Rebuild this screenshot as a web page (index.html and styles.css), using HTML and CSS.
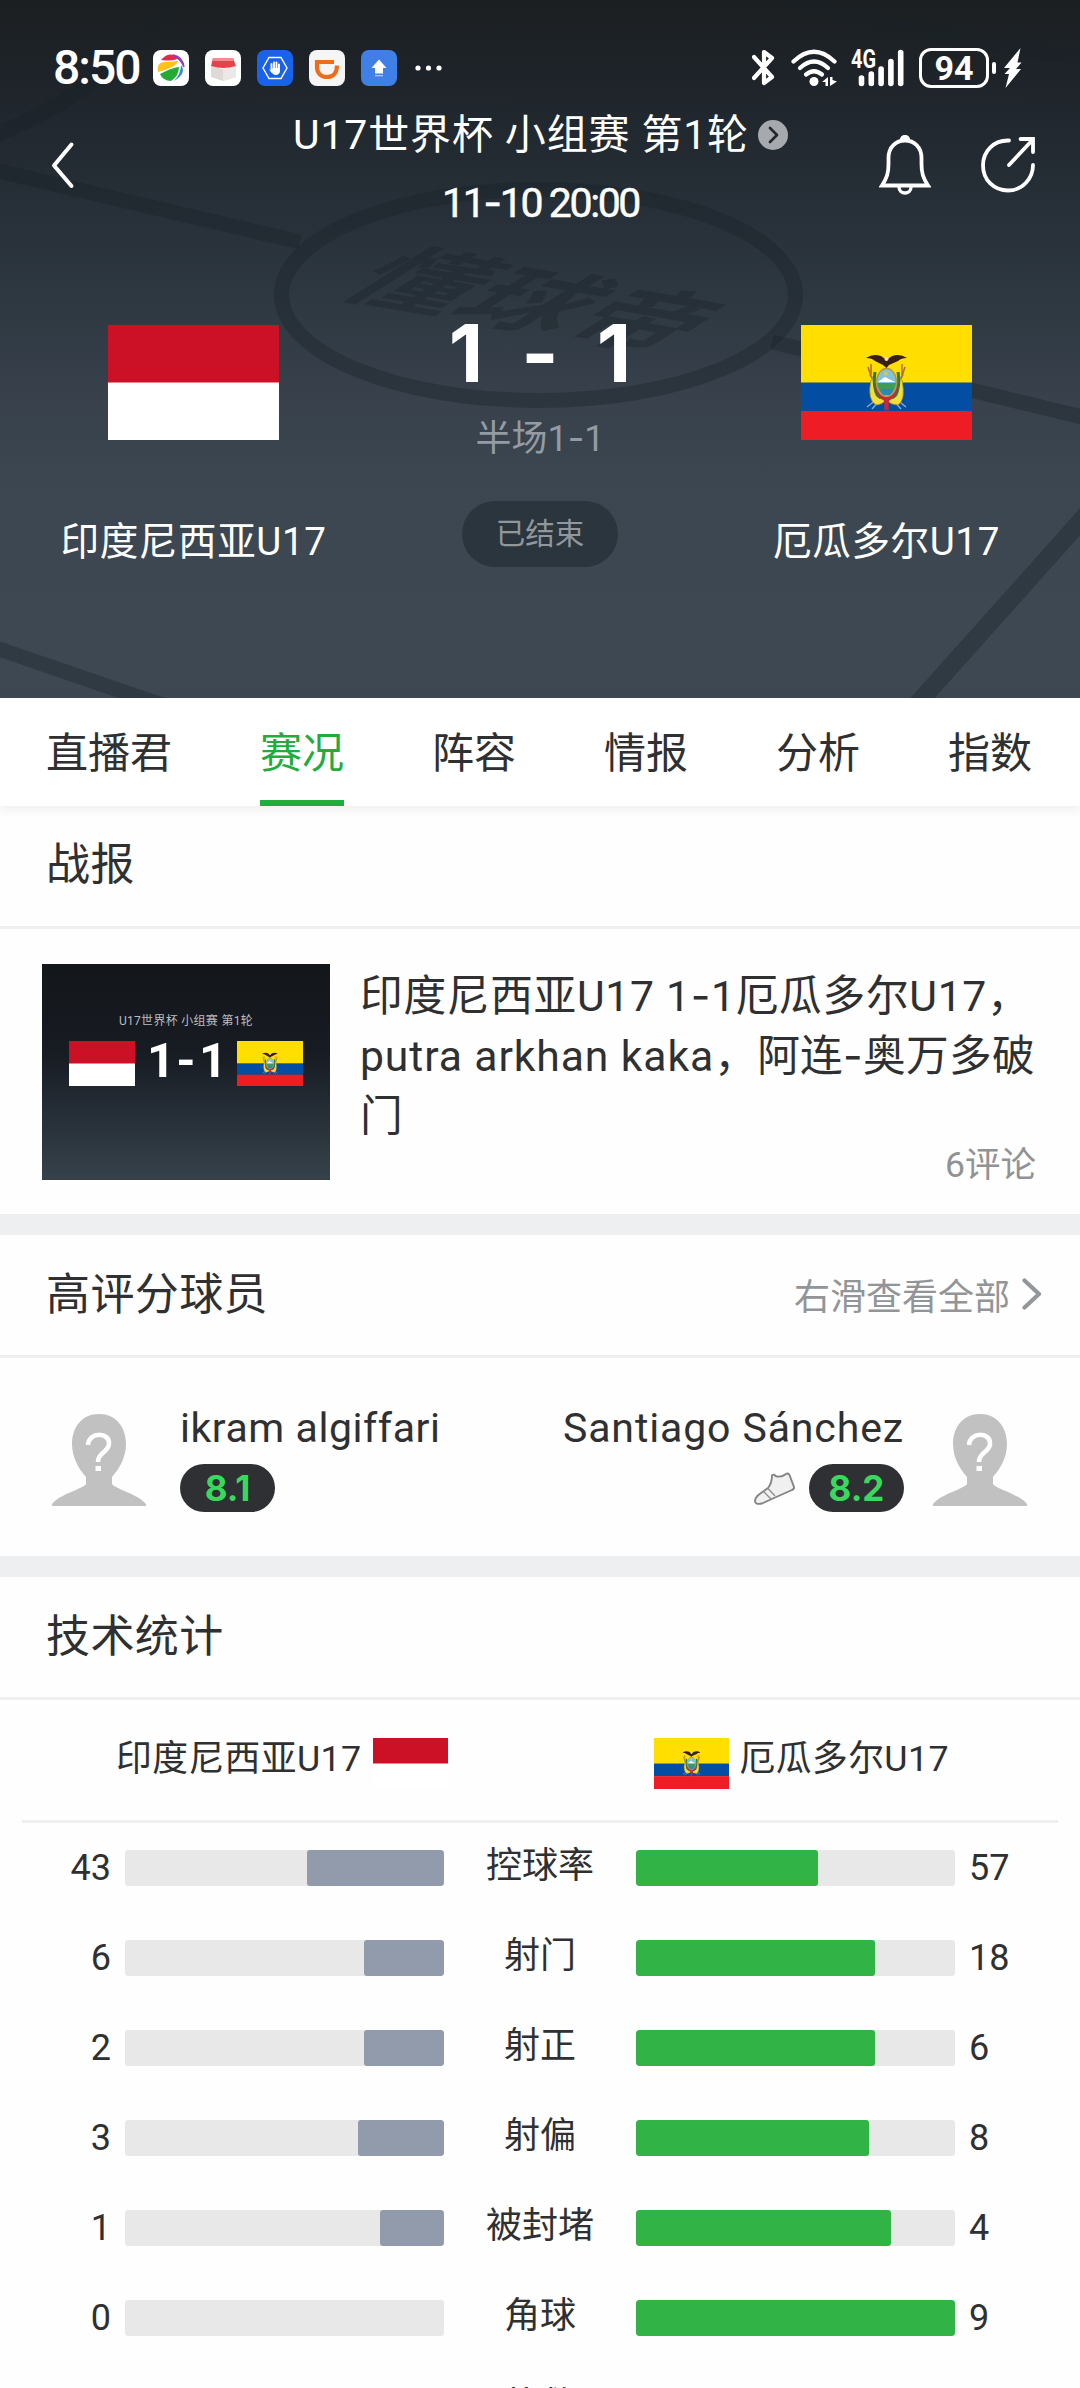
FILE: index.html
```html
<!DOCTYPE html>
<html lang="zh-CN">
<head>
<meta charset="utf-8">
<title>U17世界杯 小组赛 第1轮</title>
<link rel="stylesheet" href="styles.css">
</head>
<body>
<svg class="defs" width="0" height="0" aria-hidden="true">
  <symbol id="flag-id" viewBox="0 0 171 115" preserveAspectRatio="none">
    <rect width="171" height="115" fill="#fff"/>
    <rect width="171" height="57.5" fill="#cc1126"/>
  </symbol>
  <symbol id="flag-ec" viewBox="0 0 171 115" preserveAspectRatio="none">
    <rect width="171" height="58" fill="#ffde00"/>
    <rect y="57.5" width="171" height="29" fill="#034ea2"/>
    <rect y="86" width="171" height="29" fill="#ee1c25"/>
    <path d="M68 50 L77 56 M103 50 L94 56 M66 82 L76 74 M105 82 L95 74 M71 84 L78 76 M100 84 L93 76" stroke="#8fa9c4" stroke-width="1.4"/>
    <path d="M67 42 L71 54 M104 42 L100 54 M70 39 V50 M101 39 V50" stroke="#b5702c" stroke-width="1.6"/>
    <path d="M70 55 Q66 75 75 80 Q81 80 85 75 Q90 80 97 80 Q105 75 101 55 L96 55 Q100 70 93 73 L78 73 Q71 70 75 55 Z" fill="#f4de3c" stroke="#a08a20" stroke-width=".8"/>
    <path d="M74 47 Q71 66 80 73 M97 47 Q100 66 91 73" stroke="#2f7a3a" stroke-width="3" fill="none"/>
    <path d="M76 60 Q77 71 85.500 75 Q94 71 95 60" stroke="#c8283c" stroke-width="4" fill="none"/>
    <path d="M83 73 H88 L87.500 87 L85.500 84 L83.500 87 Z" fill="#c8283c"/>
    <ellipse cx="85.500" cy="57.500" rx="10" ry="14" fill="#7fc4dc" stroke="#b9973a" stroke-width="1.500"/>
    <path d="M77 57 L84 52 L94 57 Z" fill="#fff"/>
    <path d="M76 58 H95 Q94 65 90 69 L81 69 Q77 65 76 58Z" fill="#3f9a62"/>
    <path d="M80 64 H92 L89 70 H82Z" fill="#2a88b4"/>
    <circle cx="85" cy="48.500" r="2" fill="#e0c63c"/>
    <path d="M65 33 Q72 28 80 31 L85.500 35 L91 31 Q99 28 106 33 Q100 33 97 36 L88 40 L85.500 43 L82 40 L74 36 Q71 33 65 33Z" fill="#3a1f16"/>
    <circle cx="85.500" cy="34" r="2" fill="#e9dfc8"/>
  </symbol>
  <symbol id="avatar" viewBox="0 0 96 92">
    <path d="M48 0C65 0 75 13 75 30C75 44 68 55 61 63V70C64 75 87 80 95 90Q96 92 93 92H3Q0 92 1 90C9 80 32 75 35 70V63C28 55 21 44 21 30C21 13 31 0 48 0Z" fill="#c1c1c1"/>
    <path d="M37 31C38 17 59 18 58 30C57 39 47 38 47 48" stroke="#fff" stroke-width="4.600" fill="none"/>
    <rect x="44.500" y="52" width="5.500" height="5" fill="#fff"/>
  </symbol>
</svg>

<header class="hero">
  <svg class="pitch" viewBox="0 0 1080 698" aria-hidden="true">
    <g class="pitch-lines">
      <ellipse cx="538.500" cy="295" rx="257" ry="105.500"/>
      <path d="M175 0Q110 90 -10 137"/>
      <path d="M-10 169L300 242"/>
      <path d="M772 342L1090 419"/>
      <path d="M790 0Q940 40 1090 58"/>
      <path d="M-10 646L165 706"/>
      <path d="M1095 505L910 712" stroke-width="18"/>
    </g>
    <text class="pitch-mark" transform="matrix(1.09 .19 -.95 .6 334 294)">懂球帝</text>
  </svg>

  <div class="status">
    <span class="clock">8:50</span>
    <div class="apps">
      <svg viewBox="0 0 36 36"><rect width="36" height="36" rx="8" fill="#fff"/><path d="M8 10Q16 1 25 7Q24 12 8 10Z" fill="#e62a4c"/><path d="M20 5Q30 7 31 17Q28 9 20 5Z" fill="#8a3fc0" stroke="#8a3fc0" stroke-width="1.500"/><path d="M5 22Q3 11 14 12L25 11Q24 17 5 22Z" fill="#fcc21b"/><path d="M7 24Q18 18 26 17Q26 26 18 31Q10 31 7 24Z" fill="#23ab35"/><path d="M28 15Q34 23 21 31Q28 24 28 15Z" fill="#2f83e0"/></svg>
      <svg viewBox="0 0 36 36"><rect width="36" height="36" rx="8" fill="#fff"/><path d="M6 16L18 19V31L6 27ZM31 16L18 19V31L31 27Z" fill="#dcd9d7"/><path d="M18 19V31L31 27V16Z" fill="#ebe8e6"/><path d="M8 8H28L31 16Q18 20 6 16Z" fill="#e8414b"/><path d="M8 8H28L28.500 11H7.500Z" fill="#f48a8e"/></svg>
      <svg viewBox="0 0 36 36"><rect width="36" height="36" rx="8" fill="#1a62ea"/><path d="M12 7.500H24L30 18L24 28.500H12L6 18Z" fill="none" stroke="#fff" stroke-width="1.400"/><path d="M14.500 14V21M17 12.500V20M19.500 12.500V20M22 14.500V20" stroke="#fff" stroke-width="1.900" stroke-linecap="round"/><path d="M12 18.500L16 22H23V20Q23 25 18.500 25Q15 25 12 18.500Z" fill="#fff"/><rect x="14" y="18" width="9" height="5" rx="2" fill="#fff"/></svg>
      <svg viewBox="0 0 36 36"><rect width="36" height="36" rx="8" fill="#f6f5f5"/><path d="M25 12H8V17C8 23 12 27 18 27C24 27 28 23 28 15.500" fill="none" stroke="#ef6c1a" stroke-width="4.200"/></svg>
      <svg viewBox="0 0 36 36"><rect width="36" height="36" rx="8" fill="#4080e6"/><path d="M18 9.500L25.500 18H22V23.500H14V18H10.500Z" fill="#fff"/><rect x="14" y="25" width="8" height="1.300" fill="#a9c8f6"/></svg>
      <svg class="more" viewBox="0 0 28 36"><g fill="#fff"><circle cx="3" cy="18" r="2.600"/><circle cx="13.500" cy="18" r="2.600"/><circle cx="24" cy="18" r="2.600"/></g></svg>
    </div>
    <div class="signals">
      <svg class="bt" viewBox="0 0 24 38"><path d="M2 8L20 28L12 34V3L20 9L2 29" fill="none" stroke="#fff" stroke-width="4.200" stroke-linecap="round" stroke-linejoin="round"/></svg>
      <svg class="wifi" viewBox="0 0 46 38"><g fill="none" stroke="#fff" stroke-width="4.200" stroke-linecap="round"><path d="M2.500 12.500Q23 -7 43.500 12.500"/><path d="M9 19Q23 6 37 19"/><path d="M15 25.500Q23 19 31 25.500"/></g><circle cx="23" cy="32.500" r="4.500" fill="#fff"/><path d="M37 28V37H34.500V33H31ZM39 28V37L46 32.500L41.500 31V28Z" fill="#fff"/></svg>
      <svg class="cell" viewBox="0 0 54 38"><text class="net" x="0" y="19" textLength="25" lengthAdjust="spacingAndGlyphs">4G</text><g stroke="#fff" stroke-width="5.600" stroke-linecap="round"><path d="M10.500 29V34.500M20.300 25V34.500M30.100 20V34.500M39.900 12.500V34.500M49.700 3.500V34.500"/></g></svg>
      <div class="battery"><span class="level">94</span></div>
      <i class="battery-cap"></i>
      <svg class="bolt" viewBox="0 0 20 40"><path d="M17.500 0L1 20H7L1.500 26H6L2.500 40L18 21H13L18.500 14.500H14.500Z" fill="#fff"/></svg>
    </div>
  </div>

  <div class="nav">
    <svg class="back" viewBox="0 0 24 48"><path d="M20.500 3.500L3 24.500L20.500 45" fill="none" stroke="#fff" stroke-width="4" stroke-linecap="round" stroke-linejoin="round"/></svg>
    <div class="heading">
      <div class="league"><span>U17世界杯 小组赛 第1轮</span>
        <svg viewBox="0 0 30 30"><circle cx="15" cy="15" r="15" fill="#a6aaae"/><path d="M12 8L19 15L12 22" fill="none" stroke="#22282e" stroke-width="2.700" stroke-linecap="round" stroke-linejoin="round"/></svg>
      </div>
      <div class="kickoff">11<span class="dash">-</span>10 20:00</div>
    </div>
    <div class="actions">
      <svg class="bell" viewBox="0 0 52 60"><path d="M3 50.500C8 43 9.500 38 9.500 29V23C9.500 12 17 5.500 26 5.500C35 5.500 42.500 12 42.500 23V29C42.500 38 44 43 49 50.500Z" fill="none" stroke="#fff" stroke-width="3.800"/><path d="M21 5C21 1.500 23 0 26 0S31 1.500 31 5Z" fill="#fff"/><path d="M20 52C20 60 32 60 32 52" fill="none" stroke="#fff" stroke-width="3.400"/></svg>
      <svg class="share" viewBox="0 0 54 56"><path d="M28 3.500C13 3 2 14 2 28.500C2 43 13 53.500 27 53.500C41 53.500 52 42 52 28M28 28L51 3.500M39.500 2H52V15" fill="none" stroke="#fff" stroke-width="3.800" stroke-linecap="round"/></svg>
    </div>
  </div>

  <div class="match">
    <div class="team">
      <svg class="flag"><use href="#flag-id"/></svg>
      <span class="team-name">印度尼西亚U17</span>
    </div>
    <div class="result">
      <div class="score"><span>1</span><span>-</span><span>1</span></div>
      <div class="half">半场1<span class="dash">-</span>1</div>
      <div class="state">已结束</div>
    </div>
    <div class="team">
      <svg class="flag"><use href="#flag-ec"/></svg>
      <span class="team-name">厄瓜多尔U17</span>
    </div>
  </div>
</header>

<nav class="tabs">
  <span class="tab">直播君</span>
  <span class="tab active">赛况</span>
  <span class="tab">阵容</span>
  <span class="tab">情报</span>
  <span class="tab">分析</span>
  <span class="tab">指数</span>
</nav>

<section class="section report">
  <div class="section-head"><h2>战报</h2></div>
  <article class="news">
    <div class="thumb">
      <div class="thumb-title">U17世界杯 小组赛 第1轮</div>
      <div class="thumb-match">
        <svg class="thumb-flag"><use href="#flag-id"/></svg>
        <div class="thumb-score"><span>1</span><span>-</span><span>1</span></div>
        <svg class="thumb-flag"><use href="#flag-ec"/></svg>
      </div>
    </div>
    <div class="news-body">
      <p><span class="teams">印度尼西亚U17 1<span class="dash">-</span>1厄瓜多尔U17，</span><br><span class="scorer">putra arkhan kaka</span>，阿连<span class="dash">-</span>奥万多破<br>门</p>
      <span class="comments">6评论</span>
    </div>
  </article>
</section>

<section class="section">
  <div class="section-head">
    <h2>高评分球员</h2>
    <div class="more-link"><span>右滑查看全部</span><svg viewBox="0 0 20 32"><path d="M2.500 2.500L17 16L2.500 29.500" fill="none" stroke="#949799" stroke-width="4.200" stroke-linecap="round" stroke-linejoin="round"/></svg></div>
  </div>
  <div class="players">
    <div class="player">
      <svg class="avatar"><use href="#avatar"/></svg>
      <div class="player-info">
        <span class="player-name">ikram algiffari</span>
        <div class="rating-row"><span class="rating">8.1</span></div>
      </div>
    </div>
    <div class="player away">
      <div class="player-info">
        <span class="player-name">Santiago Sánchez</span>
        <div class="rating-row">
          <svg class="boot" viewBox="0 0 41 33"><path d="M18 3.500Q20 1.500 21.500 4Q27 6 32 2Q34 .5 35.500 3L40 15Q40.500 17 38 18L20 26L8 31.500Q1 33 1 29Q1 26 5 22.500L14 16Q18 11 18 3.500Z" fill="#f0f0f0" stroke="#848484" stroke-width="1.900" stroke-linejoin="round"/><path d="M10 20L17 27M14 16.500L21 24" stroke="#8c8c8c" stroke-width="1.300"/></svg>
          <span class="rating">8.2</span>
        </div>
      </div>
      <svg class="avatar"><use href="#avatar"/></svg>
    </div>
  </div>
</section>

<section class="section stats">
  <div class="section-head"><h2>技术统计</h2></div>
  <div class="stat-teams">
    <div class="stat-team"><span>印度尼西亚U17</span><svg class="half-flag" viewBox="0 0 75 51"><rect width="75" height="51" fill="#fff"/><rect width="75" height="25.500" fill="#cc1126"/></svg></div>
    <div class="stat-team right"><svg><use href="#flag-ec"/></svg><span>厄瓜多尔U17</span></div>
  </div>
  <div class="stat-list">
    <div class="stat"><b>43</b><div class="bar home"><i style="width:43%"></i></div><em>控球率</em><div class="bar"><i style="width:57%"></i></div><b>57</b></div>
    <div class="stat"><b>6</b><div class="bar home"><i style="width:25%"></i></div><em>射门</em><div class="bar"><i style="width:75%"></i></div><b>18</b></div>
    <div class="stat"><b>2</b><div class="bar home"><i style="width:25%"></i></div><em>射正</em><div class="bar"><i style="width:75%"></i></div><b>6</b></div>
    <div class="stat"><b>3</b><div class="bar home"><i style="width:27%"></i></div><em>射偏</em><div class="bar"><i style="width:73%"></i></div><b>8</b></div>
    <div class="stat"><b>1</b><div class="bar home"><i style="width:20%"></i></div><em>被封堵</em><div class="bar"><i style="width:80%"></i></div><b>4</b></div>
    <div class="stat"><b>0</b><div class="bar home"><i style="width:0%"></i></div><em>角球</em><div class="bar"><i style="width:100%"></i></div><b>9</b></div>
    <div class="stat label-only"><em>扑救</em></div>
  </div>
</section>
</body>
</html>
```

FILE: styles.css
```css
* { box-sizing: border-box; }

body {
  margin: 0;
  width: 1080px;
  height: 2388px;
  overflow: hidden;
  background: #fefefe;
  color: #2f3031;
  font-family: Roboto, "Noto Sans CJK SC", sans-serif;
}

svg { display: block; flex: none; }
.defs { position: absolute; }
.dash { font-family: Inter, sans-serif; }

/* Match header */
.hero {
  position: relative;
  height: 698px;
  color: #fff;
  background: linear-gradient(#1b1f21 0, #1e2329 70px, #222930 140px, #28313a 225px, #2f3942 310px, #38414c 400px, #3b4650 480px, #3d4853 600px, #3d4853 100%);
}
.pitch { position: absolute; left: 0; top: 0; width: 1080px; height: 698px; }
.pitch-lines { fill: none; stroke: #182028; stroke-opacity: .36; stroke-width: 15px; }
.pitch-mark { font-size: 100px; font-weight: 700; letter-spacing: 2px; fill: #182028; fill-opacity: .36; }
.status, .nav, .match { position: relative; }

.status {
  display: flex;
  align-items: center;
  height: 98px;
  padding: 38px 57px 0 53px;
}
.clock { width: 100px; font-size: 48px; font-weight: 500; line-height: 60px; letter-spacing: -2px; }
.apps { display: flex; gap: 16px; }
.apps svg { width: 36px; height: 36px; }
.apps .more { width: 28px; margin-left: 2px; }
.signals { display: flex; align-items: center; margin-left: auto; }
.bt { width: 24px; height: 38px; }
.wifi { width: 46px; height: 38px; margin-left: 15px; }
.cell { width: 54px; height: 38px; margin-left: 14px; overflow: visible; }
.net { font-size: 25px; font-weight: 700; fill: #fff; }
.battery {
  display: flex;
  align-items: center;
  justify-content: center;
  width: 70px;
  height: 40px;
  margin-left: 14px;
  border: 3px solid #fff;
  border-radius: 12px;
}
.level { font-size: 34px; font-weight: 700; line-height: 34px; }
.battery-cap { width: 4px; height: 12px; margin-left: 3px; border-radius: 2px; background: #fff; }
.bolt { width: 20px; height: 40px; margin-left: 7px; }

.nav {
  display: grid;
  grid-template-columns: 1fr auto 1fr;
  align-items: center;
  height: 134px;
  padding: 0 45px 0 51px;
}
.back { width: 24px; height: 48px; }
.heading { padding: 5px 5px 0 0; }
.league { display: flex; align-items: center; gap: 9px; font-size: 41px; line-height: 48px; letter-spacing: .85px; white-space: nowrap; }
.league svg { width: 30px; height: 30px; }
.kickoff { margin-top: 21px; text-align: center; font-size: 41px; line-height: 44px; letter-spacing: -2.400px; -webkit-text-stroke: .5px #fff; }
.actions { display: flex; align-items: center; justify-content: flex-end; gap: 50px; }
.bell { width: 52px; height: 60px; }
.share { width: 54px; height: 56px; }

.match { display: grid; grid-template-columns: 387px 306px 387px; }
.team { display: flex; flex-direction: column; align-items: center; padding-top: 93px; }
.flag { width: 171px; height: 115px; }
.team-name { margin-top: 77px; font-size: 38.600px; line-height: 50px; letter-spacing: .6px; }
.result { display: flex; flex-direction: column; align-items: center; padding-top: 81px; }
.score { display: grid; grid-template-columns: repeat(3, 74px); text-align: center; font: 700 80px/80px Inter, sans-serif; }
.half { margin-top: 25px; font-size: 36px; line-height: 40px; color: #949ba2; }
.state {
  width: 156px;
  height: 66px;
  margin-top: 42px;
  border-radius: 33px;
  background: #2b353e;
  color: #92979c;
  text-align: center;
  font-size: 29.500px;
  line-height: 67px;
}

/* Tabs */
.tabs {
  position: relative;
  display: flex;
  gap: 88px;
  height: 108px;
  padding-left: 46px;
  background: #fff;
  box-shadow: 0 4px 10px #00000010;
}
.tab { height: 108px; font-size: 42px; line-height: 112px; white-space: nowrap; }
.tab.active { color: #22ab3e; border-bottom: 6px solid #22ab3e; }

/* Sections */
.section { border-bottom: 21px solid #edeff1; }
.stats { border-bottom: 0; }
.section-head {
  display: flex;
  align-items: center;
  justify-content: space-between;
  height: 123px;
  padding: 0 38px 0 46px;
  border-bottom: 3px solid #eeefef;
}
.report .section-head { padding-bottom: 2px; }
h2 { margin: 0; font-size: 44px; font-weight: 400; line-height: 60px; letter-spacing: .4px; }
.more-link { display: flex; align-items: center; gap: 12px; padding-bottom: 3px; font-size: 36px; color: #929597; }
.more-link svg { width: 20px; height: 32px; }

.news { display: flex; height: 285px; padding: 35px 0 0 42px; }
.thumb { width: 288px; height: 216px; padding-top: 47px; background: linear-gradient(#13171b 0, #171b22 40%, #252d36 68%, #36424b 100%); }
.thumb-title { color: #b9bcc0; text-align: center; font-size: 12px; line-height: 20px; letter-spacing: .3px; }
.thumb-match { display: flex; padding: 10px 27px 0; }
.thumb-flag { width: 66px; height: 45px; }
.thumb-score { flex: 1; display: grid; grid-template-columns: repeat(3, 26px); justify-content: center; text-align: center; color: #fff; font: 700 49px/40px Roboto, sans-serif; }
.news-body { flex: none; width: 676px; margin-left: 30px; }
.news-body p { margin: 2px 0 0; font-size: 42.700px; line-height: 60px; letter-spacing: .3px; white-space: nowrap; }
.teams { letter-spacing: .7px; }
.scorer { letter-spacing: .9px; }
.comments { display: block; margin-top: -3px; text-align: right; font-size: 35.500px; line-height: 44px; color: #909294; }

.players { display: flex; justify-content: space-between; height: 198px; padding: 48px 52px 0 51px; }
.player { display: flex; gap: 33px; }
.player.away { gap: 28px; }
.avatar { width: 96px; height: 92px; margin-top: 8px; }
.player-info { display: flex; flex-direction: column; }
.player.away .player-info { align-items: flex-end; }
.player-name { font-size: 41px; line-height: 44px; letter-spacing: .55px; }
.player.away .player-name { letter-spacing: .88px; }
.rating-row { display: flex; align-items: center; gap: 14px; margin-top: 14px; }
.boot { width: 41px; height: 33px; }
.rating {
  width: 95px;
  height: 48px;
  border-radius: 24px;
  background: #2e3034;
  color: #39d95e;
  text-align: center;
  font: 700 35px/48px Inter, sans-serif;
}

/* Technical statistics */
.stat-teams {
  display: flex;
  justify-content: space-between;
  height: 123px;
  margin: 0 22px;
  padding: 38px 109px 0 94px;
  border-bottom: 3px solid #efefef;
}
.stat-team { display: flex; gap: 11px; font-size: 35.800px; line-height: 42px; letter-spacing: .4px; }
.stat-team svg { width: 75px; height: 51px; }
.stat {
  display: grid;
  grid-template-columns: 111px 319px 164px 319px 111px;
  column-gap: 14px;
  align-items: center;
  height: 90px;
}
.stat b { font-size: 36px; font-weight: 400; line-height: 40px; }
.stat b:first-child { text-align: right; }
.stat em { padding-bottom: 5px; text-align: center; font-style: normal; font-size: 36px; line-height: 40px; }
.label-only em { grid-column: 3; }
.bar { display: flex; height: 36px; border-radius: 3px; background: #e8e8e8; overflow: hidden; }
.bar i { border-radius: 3px; background: #31b445; }
.bar.home { justify-content: flex-end; }
.bar.home i { background: #929bab; }
```
